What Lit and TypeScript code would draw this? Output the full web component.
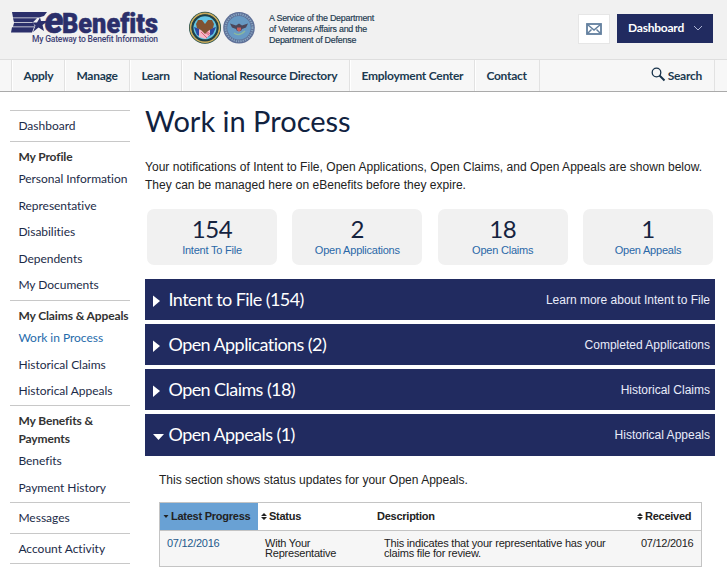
import { LitElement, html, css, svg } from "lit";
import { customElement, property } from "lit/decorators.js";
import { classMap } from "lit/directives/class-map.js";

@customElement("eb-logo")
class EbLogo extends LitElement {
  static styles = css`
    :host { display: block; width: 150px; height: 36px; }
    svg { display: block; overflow: visible; }
    .word { font: 900 28px Roboto, sans-serif; fill: #2b2f6b; stroke: #2b2f6b; stroke-width: 0.5; font-variant-ligatures: none; }
    .e { font: italic 900 36px Roboto, sans-serif; fill: #2b2f6b; stroke: #2b2f6b; stroke-width: 0.6; }
    .tag { font: 500 8.5px Roboto, sans-serif; fill: #3d4175; font-variant-ligatures: none; }
  `;
  render() {
    return html`<svg width="150" height="36" viewBox="0 0 150 36">
      <path fill="#2b2f6b" d="M1 1H36L33 5L28 6.500H2ZM2 7.200H26L22 11.300H3ZM3 12H22L24 15.500H2ZM1 16.200H23L21 21.500H0Z" />
      <path fill="#2b2f6b" d="M29 6.500L30 10H37L31.500 14L33 20L27.500 16.500L22 21L24.500 14.500L21 11.500H26Z" />
      <text class="e" x="33.500" y="21.500" textLength="19" lengthAdjust="spacingAndGlyphs">e</text>
      <text class="word" x="51" y="21.500" textLength="96" lengthAdjust="spacingAndGlyphs">Benefits</text>
      <text class="tag" x="21" y="31" textLength="126">My Gateway to Benefit Information</text>
    </svg>`;
  }
}

@customElement("eb-seals")
class EbSeals extends LitElement {
  static styles = css`:host, svg { display: block; }`;
  render() {
    return html`<svg width="68" height="34" viewBox="0 0 68 34">
      <circle cx="17" cy="16.800" r="16" fill="#1d4a45" />
      <circle cx="17" cy="16.800" r="14.400" fill="none" stroke="#c7a85c" stroke-width="1.700" />
      <circle cx="17" cy="16.800" r="12.500" fill="none" stroke="#203f48" stroke-width="1.800" />
      <circle cx="17" cy="16.800" r="11.500" fill="#62c3e3" />
      <path fill="#2b49a0" d="M6 16L12 18L14 26L9 24ZM28 16L22 18L20 26L25 23Z" />
      <path fill="#f5b6c6" d="M11 18L16 20L22 17L22 24L17.500 28L11 26Z" />
      <path stroke="#d9607a" stroke-width="1" d="M13 21L19 27M14 19L21 24M18 20L22 23" />
      <path fill="#805332" d="M8 13L10 9H14L17 13L20 9H24L26 13L25 17L20 20L17 23L13 19L9 17Z" />
      <circle cx="51" cy="16.800" r="15.800" fill="#5d6e96" />
      <circle cx="51" cy="16.800" r="13.500" fill="none" stroke="#87a5c0" stroke-width="2" stroke-dasharray="1.300 1" />
      <circle cx="51" cy="16.800" r="11.800" fill="#6799c3" />
      <path fill="#4c4659" d="M42 12.500L48 14.500L51 12.500L54 14.500L60 12.500L58 16.500L54 18L53 20H49L48 18L44 16.500Z" />
      <path fill="#c65c5b" d="M49 16.500H53V19L51 21L49 19Z" />
      <path stroke="#8bb99d" stroke-width="1.300" fill="none" d="M46 22Q51 26 57 20" />
    </svg>`;
  }
}

@customElement("eb-header")
class EbHeader extends LitElement {
  static styles = css`
    :host { display: block; color: #1b3a50; font-family: Lato, sans-serif; font-variant-ligatures: none; }
    .top { box-sizing: border-box; height: 60px; background: #f1f1f1; border-bottom: 1px solid #dedede; display: flex; align-items: flex-start; padding: 0 14px 0 11px; }
    eb-logo { margin-top: 11px; }
    eb-seals { margin: 11px 0 0 27px; }
    .service { margin: 13px 0 0 13px; width: 130px; font: 8.9px/11px "Liberation Sans", sans-serif; letter-spacing: -0.22px; white-space: nowrap; -webkit-text-stroke: 0.15px #17324a; }
    .mail { box-sizing: border-box; width: 32px; height: 30px; margin: 14px 7px 0 auto; background: #fff; border: 1px solid #e6e6e6; display: grid; place-items: center; }
    .dash { width: 96px; height: 29px; margin-top: 14px; background: #212b60; color: #fff; display: flex; align-items: center; font-size: 12px; line-height: 26px; font-weight: 700; letter-spacing: -0.22px; }
    .dash span { margin: -2px 0 0 11px; width: 65px; }
    .dash svg { margin-top: -2px; }
    .nav { box-sizing: border-box; height: 32px; display: flex; background: #f7f7f7; border-bottom: 1px solid #aaa; padding: 0 12px 0 11px; font-size: 12px; font-weight: 700; letter-spacing: -0.26px; }
    .item { box-sizing: border-box; border-left: 1px solid #e2e2e2; box-shadow: inset 1px 0 #fff; padding-left: 11.4px; line-height: 31px; white-space: nowrap; }
    .w1 { width: 53px; } .w2 { width: 65px; } .w3 { width: 52px; } .w4 { width: 168px; }
    .w5 { width: 125px; } .w6 { width: 65px; }
    .search { display: flex; margin-left: auto; line-height: 31px; padding-right: 12px; border-right: 1px solid #e2e2e2; }
    .search svg { margin: 7px 2px 0 0; }
    .end { width: 0; border-left: 1px solid #e2e2e2; }
  `;
  render() {
    const items = ["Apply", "Manage", "Learn", "National Resource Directory", "Employment Center", "Contact"];
    return html`
      <div class="top">
        <eb-logo></eb-logo>
        <eb-seals></eb-seals>
        <div class="service">A Service of the Department<br />of Veterans Affairs and the<br />Department of Defense</div>
        <div class="mail">
          <svg width="16" height="12" viewBox="0 0 16 12" fill="none" stroke="#627f9e">
            <rect x="1" y="1" width="14" height="10" stroke-width="1.800" />
            <path d="M1.500 1.500L8 7L14.500 1.500M1.500 10.500L5.500 6.500M14.500 10.500L10.500 6.500" stroke-width="1.500" />
          </svg>
        </div>
        <div class="dash"><span>Dashboard</span>
          <svg width="10" height="6" viewBox="0 0 10 6" fill="none" stroke="#aeb5d4"><path d="M1 1L5 5L9 1" /></svg>
        </div>
      </div>
      <div class="nav">
        ${items.map((t, i) => html`<div class="item w${i + 1}">${t}</div>`)}
        <div class="end"></div>
        <div class="search">
          <svg width="15" height="15" viewBox="0 0 15 15" fill="none" stroke="#17324a"><circle cx="5.500" cy="5.500" r="4.300" stroke-width="1.300" /><path d="M8.500 8.500L13.500 13.500" stroke-width="2" /></svg>
          <span>Search</span>
        </div>
      </div>`;
  }
}

@customElement("eb-sidebar")
class EbSidebar extends LitElement {
  static styles = css`
    :host { display: block; width: 120px; font: 12px Lato, sans-serif; font-variant-ligatures: none; color: #1c2b48; }
    .group { box-sizing: border-box; border-top: 1px solid #c8c8c8; padding-left: 8.4px; white-space: nowrap; }
    .single { height: 31px; line-height: 29px; }
    .last { border-bottom: 1px solid #c8c8c8; }
    .h159 { height: 159px; } .h105 { height: 105px; } .h97 { height: 97px; }
    .head { padding-top: 6px; line-height: 18px; font-weight: 700; letter-spacing: -0.12px; color: #333; }
    .link { height: 26.5px; line-height: 26px; letter-spacing: -0.03px; }
    .on { color: #1f6bab; }
  `;
  render() {
    const group = (cls: string, head: unknown, links: string[]) => html`
      <div class="group ${cls}"><div class="head">${head}</div>
        ${links.map((l) => html`<div class=${classMap({ link: true, on: l === "Work in Process" })}>${l}</div>`)}
      </div>`;
    return html`
      <div class="group single">Dashboard</div>
      ${group("h159", "My Profile", ["Personal Information", "Representative", "Disabilities", "Dependents", "My Documents"])}
      ${group("h105", "My Claims & Appeals", ["Work in Process", "Historical Claims", "Historical Appeals"])}
      ${group("h97", html`My Benefits &amp;<br />Payments`, ["Benefits", "Payment History"])}
      <div class="group single">Messages</div>
      <div class="group single last">Account Activity</div>`;
  }
}

@customElement("eb-bar")
class EbBar extends LitElement {
  @property() label = "";
  @property() link = "";
  @property({ type: Boolean, reflect: true }) open = false;
  static styles = css`
    :host { display: flex; box-sizing: border-box; height: 41px; background: #212b60; color: #fff; padding: 0 5px 0 8px; }
    :host([open]) { height: 42px; }
    svg { margin-top: 16px; width: 11px; height: 12px; }
    .label { font: 18px/41px Lato, sans-serif; font-variant-ligatures: none; letter-spacing: -0.57px; margin-left: 4.5px; }
    .link { margin-left: auto; font: 12px/42px "Liberation Sans", sans-serif; color: #e9ecfa; }
  `;
  render() {
    return html`
      <svg viewBox="0 0 11 12" fill="#fff">${this.open ? svg`<path d="M0 4H11L5.500 10Z" />` : svg`<path d="M0 0.500L7 6L0 12Z" />`}</svg>
      <span class="label">${this.label}</span><span class="link">${this.link}</span>`;
  }
}

@customElement("eb-table")
class EbTable extends LitElement {
  static styles = css`
    :host { display: block; box-sizing: border-box; width: 543px; border: 1px solid #c4c4c4; font: 11px/10px "Liberation Sans", sans-serif; letter-spacing: -0.2px; color: #222; }
    .row { display: grid; grid-template-columns: 98px 113px 263px 67px; }
    .head { height: 27px; line-height: 27px; font-weight: 700; letter-spacing: -0.25px; }
    .body { box-sizing: border-box; height: 36px; padding-top: 7px; background: #f6f6f6; border-top: 1px solid #c4c4c4; }
    .cell { white-space: nowrap; display: flex; align-items: center; }
    .sorted { background: #69a1d4; }
    .icon { width: 6px; height: 7px; margin: 0 2px 0 3px; }
    .desc { padding-left: 6px; }
    .body > div { padding-left: 7px; white-space: nowrap; }
    .body .d { padding-left: 13px; }
    .body .num { letter-spacing: -0.27px; }
    .date { color: #245a8c; }
  `;
  render() {
    const both = html`<svg class="icon" viewBox="0 0 6 7"><path d="M0 3L3 0L6 3ZM0 4H6L3 7Z" fill="#222" /></svg>`;
    return html`
      <div class="row head">
        <div class="cell sorted"><svg class="icon" viewBox="0 0 6 7"><path d="M0.500 2H5.500L3 5Z" fill="#222" /></svg>Latest Progress</div>
        <div class="cell">${both}Status</div>
        <div class="cell desc">Description</div>
        <div class="cell">${both}Received</div>
      </div>
      <div class="row body">
        <div class="date num">07/12/2016</div>
        <div>With Your<br />Representative</div>
        <div class="d">This indicates that your representative has your<br />claims file for review.</div>
        <div class="num">07/12/2016</div>
      </div>`;
  }
}

@customElement("app-root")
class AppRoot extends LitElement {
  static styles = css`
    :host { display: block; height: 587px; background: #fff; overflow: hidden; }
    .page { display: flex; padding-left: 10px; }
    eb-sidebar { margin-top: 18px; }
    .main { width: 570px; margin-left: 15px; font-family: "Liberation Sans", sans-serif; color: #222; }
    h1 { margin: 11px 0 0; height: 36px; font: 29px/36px Lato, sans-serif; color: #112240; }
    .intro { margin: 19px 0 0; font-size: 12px; line-height: 18px; letter-spacing: 0.025px; white-space: nowrap; }
    .stats { display: grid; grid-template-columns: repeat(4, 130px); justify-content: space-between; margin: 15px 2px 14px; }
    .stat { height: 56px; border-radius: 7px; background: #f1f1f1; text-align: center; }
    .num { padding-top: 5px; font: 24px/30px Lato, sans-serif; letter-spacing: -0.4px; color: #15233f; }
    .cap { font-size: 11px; line-height: 13px; letter-spacing: -0.22px; color: #2a68a8; }
    .bars { display: grid; gap: 4px; }
    .note { margin: 15px 0 0 14px; font-size: 12px; line-height: 18px; }
    eb-table { margin: 13px 0 0 14px; }
  `;
  render() {
    const stats = [["154", "Intent To File"], ["2", "Open Applications"], ["18", "Open Claims"], ["1", "Open Appeals"]];
    return html`
      <eb-header></eb-header>
      <div class="page">
        <eb-sidebar></eb-sidebar>
        <div class="main">
          <h1>Work in Process</h1>
          <p class="intro">Your notifications of Intent to File, Open Applications, Open Claims, and Open Appeals are shown below.<br />They can be managed here on eBenefits before they expire.</p>
          <div class="stats">${stats.map(([n, c]) => html`<div class="stat"><div class="num">${n}</div><div class="cap">${c}</div></div>`)}</div>
          <div class="bars">
            <eb-bar label="Intent to File (154)" link="Learn more about Intent to File"></eb-bar>
            <eb-bar label="Open Applications (2)" link="Completed Applications"></eb-bar>
            <eb-bar label="Open Claims (18)" link="Historical Claims"></eb-bar>
            <eb-bar label="Open Appeals (1)" link="Historical Appeals" open></eb-bar>
          </div>
          <p class="note">This section shows status updates for your Open Appeals.</p>
          <eb-table></eb-table>
        </div>
      </div>`;
  }
}
